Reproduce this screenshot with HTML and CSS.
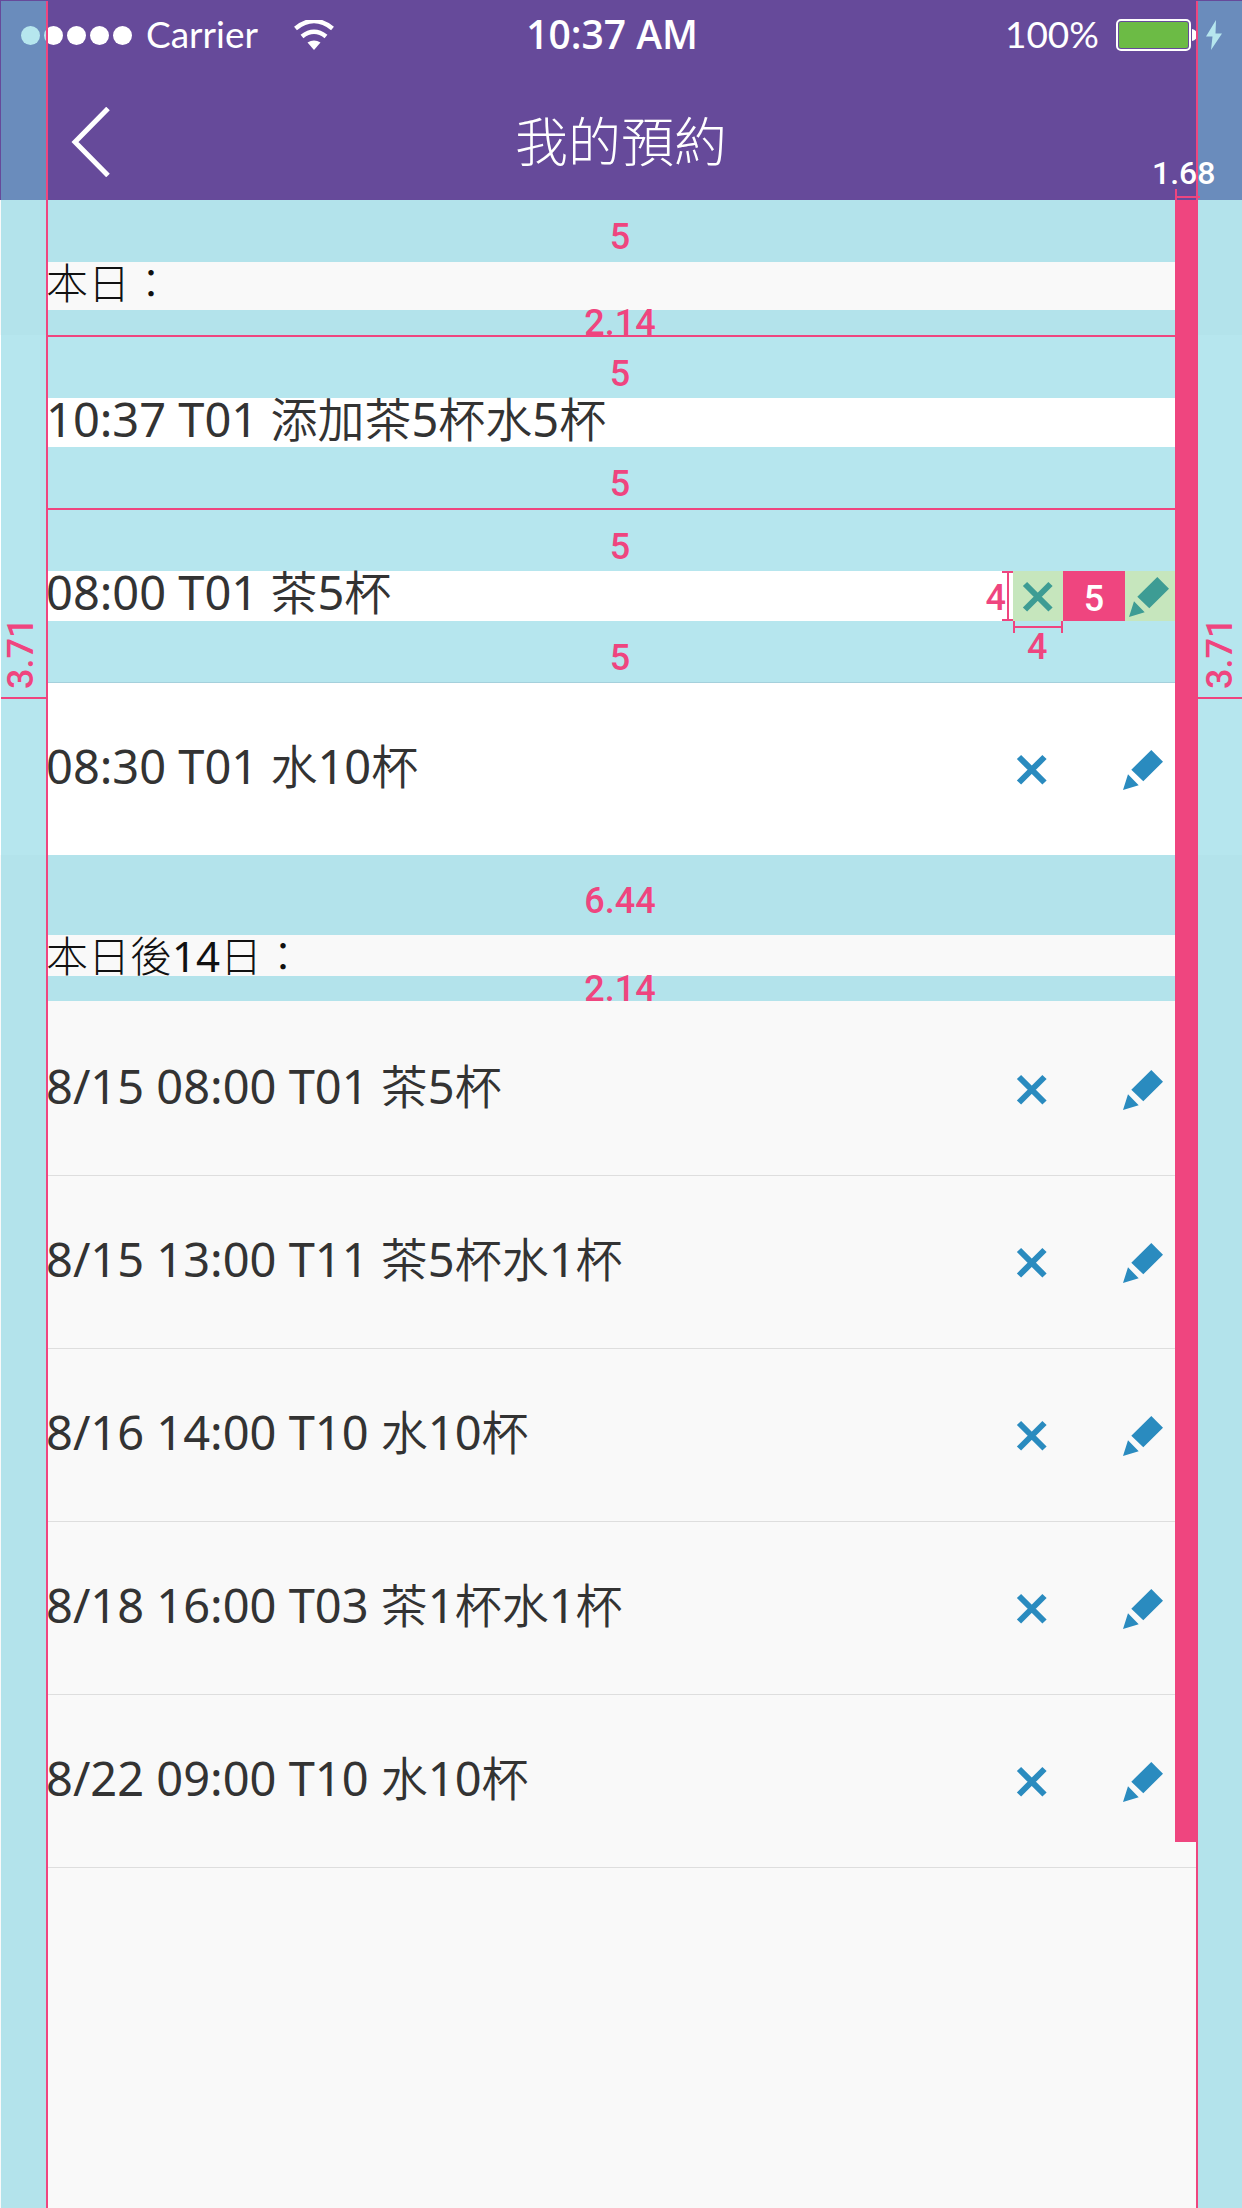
FILE: index.html
```html
<!DOCTYPE html>
<html lang="zh-Hant">
<head>
<meta charset="utf-8">
<meta name="viewport" content="width=device-width, initial-scale=1">
<title>我的預約</title>
<link rel="stylesheet" href="styles.css">
</head>
<body>
<svg class="sprite" aria-hidden="true">
  <symbol id="cross" viewBox="0 0 50 50"><path d="M12 13 37.500 38.500M37.500 13 12 38.500" fill="none" stroke="currentColor" stroke-width="6"/></symbol>
  <symbol id="pencil" viewBox="0 0 50 50"><path d="M32.300 6 44 17.700 24.300 37.300 12.300 25.700ZM9 30.300 19.700 41.300 4 46Z" fill="currentColor"/></symbol>
</svg>

<header class="header">
  <div class="status">
    <div class="status-left">
      <span class="dots"><i></i><i></i><i></i><i></i><i></i></span>
      <span class="carrier">Carrier</span>
      <svg class="wifi" viewBox="0 0 40 30" aria-hidden="true"><path d="M1.500 8.500Q20-6.500 38.500 8.500M8 16.500Q20 7 32 16.500" fill="none" stroke="#fff" stroke-width="4.600"/><path d="M13.500 22.500Q20 18.500 26.500 22.500L20 30Z" fill="#fff"/></svg>
    </div>
    <time class="clock">10:37 AM</time>
    <div class="status-right">
      <span class="percent">100%</span>
      <svg class="battery" viewBox="0 0 81 33" aria-hidden="true"><rect x="1" y="1" width="73" height="30" rx="4" fill="none" stroke="#fff" stroke-width="2"/><rect x="3" y="3" width="69" height="26" rx="2" fill="#6cbb45"/><path d="M76 10q5 1 5 6t-5 6Z" fill="#fff"/></svg>
      <svg class="bolt" viewBox="0 0 16 30" aria-hidden="true"><path d="M10 0 0 16.500H6.500L5 30 16 13.500H9.500Z" fill="#fff"/></svg>
    </div>
  </div>
  <div class="navbar">
    <button class="back" type="button" aria-label="返回"><svg viewBox="0 0 40 70" aria-hidden="true"><path d="M37 1.500 4 35 37 68.500" fill="none" stroke="#fff" stroke-width="5"/></svg></button>
    <h1>我的預約</h1>
  </div>
</header>

<main class="content">
  <section>
    <div class="space">5</div>
    <h2 class="first">本日：</h2>
    <div class="space small">2.14</div>
    <ul class="list today">
      <li class="spec done">
        <div class="space">5</div>
        <div class="entry"><span class="label">10:37 T01 添加茶5杯水5杯</span></div>
        <div class="space">5</div>
      </li>
      <li class="spec">
        <div class="space">5</div>
        <div class="entry">
          <span class="label">08:00 T01 茶5杯</span>
          <div class="actions">
            <button type="button" aria-label="取消"><svg><use href="#cross"/></svg><span class="dim dim-v"><b>4</b></span><span class="dim dim-h"><b>4</b></span></button>
            <span class="gap">5</span>
            <button type="button" aria-label="編輯"><svg><use href="#pencil"/></svg></button>
          </div>
        </div>
        <div class="space">5</div>
      </li>
      <li class="row"><span class="label">08:30 T01 水10杯</span>
        <div class="actions"><button type="button" aria-label="取消"><svg><use href="#cross"/></svg></button><button type="button" aria-label="編輯"><svg><use href="#pencil"/></svg></button></div></li>
    </ul>
  </section>
  <section>
    <div class="space large">6.44</div>
    <h2>本日後14日：</h2>
    <div class="space small">2.14</div>
    <ul class="list later">
      <li class="row"><span class="label">8/15 08:00 T01 茶5杯</span>
        <div class="actions"><button type="button" aria-label="取消"><svg><use href="#cross"/></svg></button><button type="button" aria-label="編輯"><svg><use href="#pencil"/></svg></button></div></li>
      <li class="row"><span class="label">8/15 13:00 T11 茶5杯水1杯</span>
        <div class="actions"><button type="button" aria-label="取消"><svg><use href="#cross"/></svg></button><button type="button" aria-label="編輯"><svg><use href="#pencil"/></svg></button></div></li>
      <li class="row"><span class="label">8/16 14:00 T10 水10杯</span>
        <div class="actions"><button type="button" aria-label="取消"><svg><use href="#cross"/></svg></button><button type="button" aria-label="編輯"><svg><use href="#pencil"/></svg></button></div></li>
      <li class="row"><span class="label">8/18 16:00 T03 茶1杯水1杯</span>
        <div class="actions"><button type="button" aria-label="取消"><svg><use href="#cross"/></svg></button><button type="button" aria-label="編輯"><svg><use href="#pencil"/></svg></button></div></li>
      <li class="row"><span class="label">8/22 09:00 T10 水10杯</span>
        <div class="actions"><button type="button" aria-label="取消"><svg><use href="#cross"/></svg></button><button type="button" aria-label="編輯"><svg><use href="#pencil"/></svg></button></div></li>
    </ul>
  </section>
  <div class="inset"><b>1.68</b></div>
</main>

<div class="margin margin-left"><span>3.71</span></div>
<div class="margin margin-right"><span>3.71</span></div>
</body>
</html>
```

FILE: styles.css
```css
:root {
  --purple: #664a9a;
  --pink: #ef457f;
  --blue: #2a8bbf;
  --aqua: rgba(109, 205, 221, .5);
  --side: 46px;
}

* { box-sizing: border-box; }

body {
  position: relative;
  min-height: 100vh;
  margin: 0;
  overflow-x: hidden;
  background: #f9f9f9;
  color: #333;
  font-family: "Noto Sans", "Noto Sans CJK TC DemiLight", "Noto Sans CJK TC", sans-serif;
}

h1, h2, ul { margin: 0; padding: 0; font-weight: 400; list-style: none; }
h1, h2 { font-family: "Noto Sans", "Noto Sans CJK TC Light", "Noto Sans CJK TC", sans-serif; }
svg { display: block; }
.sprite { position: absolute; width: 0; height: 0; }
button { padding: 0; border: 0; background: none; color: inherit; cursor: pointer; }

/* Header */
.header { height: 200px; background: var(--purple); color: #fff; }
.status {
  display: grid;
  grid-template-columns: 1fr auto 1fr;
  align-items: center;
  height: 70px;
  padding: 0 20px;
}
.status-left, .status-right { display: flex; align-items: center; }
.status-right { justify-content: flex-end; }
.dots { display: flex; gap: 4px; margin: 0 14px 0 1px; }
.dots i { width: 19px; height: 19px; border-radius: 50%; background: #fff; }
.carrier, .percent { padding-bottom: 2px; font-family: Lato, sans-serif; font-size: 37px; line-height: 48px; }
.wifi { width: 40px; height: 30px; margin-left: 36px; }
.clock {
  padding: 0 18px 2px 0;
  font-family: "Open Sans", sans-serif;
  font-size: 39px;
  font-weight: 600;
  line-height: 48px;
}
.battery { width: 81px; height: 33px; margin: 0 9px 0 17px; }
.bolt { width: 16px; height: 30px; }

.navbar {
  display: grid;
  grid-template-columns: 1fr auto 1fr;
  align-items: center;
  height: 144px;
  padding: 0 71px;
}
.back { width: 40px; height: 70px; }
h1 { font-size: 53px; line-height: 64px; }

/* Sections */
.content { position: relative; }
h2 { padding-left: var(--side); color: #111; font-size: 42px; line-height: 41px; }
h2.first { padding-bottom: 7px; }

.today { background: #fff; }
.later { padding-top: 2px; }
.row {
  display: flex;
  align-items: center;
  justify-content: space-between;
  height: 173px;
  margin: 0 var(--side);
  padding-right: 27px;
  border-bottom: 1px solid #dedede;
}
.today .row { height: 172px; border-bottom: 0; }
.entry {
  display: flex;
  justify-content: space-between;
  height: 50px;
  padding-right: 21px;
}
.spec { margin: 0 var(--side); border-bottom: 1px solid #a5d0dc; }
.spec.done { border: solid var(--pink); border-width: 2px 0; }
.done .entry { height: 49px; }
.label { padding-bottom: 6px; font-size: 47px; line-height: 42px; white-space: nowrap; }

.actions { display: flex; gap: 62px; color: var(--blue); }
.actions button { position: relative; width: 50px; height: 50px; }
.actions svg { width: 50px; height: 50px; }
.spec .actions { gap: 0; }
.spec .actions button::after {
  content: "";
  position: absolute;
  inset: 0;
  background: rgba(97, 186, 72, .36);
}

/* Spacing annotations */
.space, .gap, .dim b, .margin span, .inset b {
  color: var(--pink);
  font-family: Roboto, sans-serif;
  font-size: 36px;
  font-weight: 500;
  line-height: 40px;
}
.space {
  display: flex;
  align-items: center;
  justify-content: center;
  height: 61px;
  margin: 0 var(--side);
  padding: 12px 2px 0 0;
  background: var(--aqua);
}
.spec .space { margin: 0; }
.space.small { height: 25px; padding-top: 0; }
.space.large { height: 80px; }
.content > section:first-child > .space:first-child { height: 62px; }
.gap { width: 62px; padding-top: 8px; background: var(--pink); color: #fff; text-align: center; }

.dim { position: absolute; }
.dim b { position: absolute; }
.dim-v {
  top: 0;
  right: 100%;
  width: 11px;
  height: 50px;
  border: solid var(--pink);
  border-width: 2px 0;
  background: linear-gradient(var(--pink), var(--pink)) center / 2px 100% no-repeat;
}
.dim-v b { top: 5px; right: 7px; }
.dim-h {
  top: 100%;
  left: 0;
  width: 50px;
  height: 12px;
  border: solid var(--pink);
  border-width: 0 2px;
  background: linear-gradient(var(--pink), var(--pink)) center / 100% 2px no-repeat;
}
.dim-h b { top: 6px; left: 12px; }

.inset {
  position: absolute;
  z-index: 1;
  top: 0;
  right: 44px;
  width: 23px;
  height: 1642px;
  background: var(--pink);
}
.inset::before {
  content: "";
  position: absolute;
  bottom: 100%;
  left: 0;
  width: 23px;
  height: 11px;
  border-left: 2px solid var(--pink);
  background: linear-gradient(var(--pink), var(--pink)) 0 7px / 100% 2px no-repeat;
}
.inset b { position: absolute; bottom: 100%; left: -23px; color: #fff; font-size: 32px; line-height: 54px; }

.margin {
  position: absolute;
  top: 1px;
  bottom: 0;
  background: var(--aqua);
  background-clip: padding-box;
  pointer-events: none;
}
.margin-left { left: 1px; width: 47px; border-right: 2px solid var(--pink); }
.margin-right { right: 0; width: 46px; border-left: 2px solid var(--pink); }
.margin span {
  display: block;
  width: 100%;
  height: 698px;
  padding-top: 8px;
  border-top: 2px solid var(--pink);
  writing-mode: vertical-rl;
  transform: rotate(180deg);
  line-height: 44px;
}
.margin-left span { line-height: 40px; }
```
